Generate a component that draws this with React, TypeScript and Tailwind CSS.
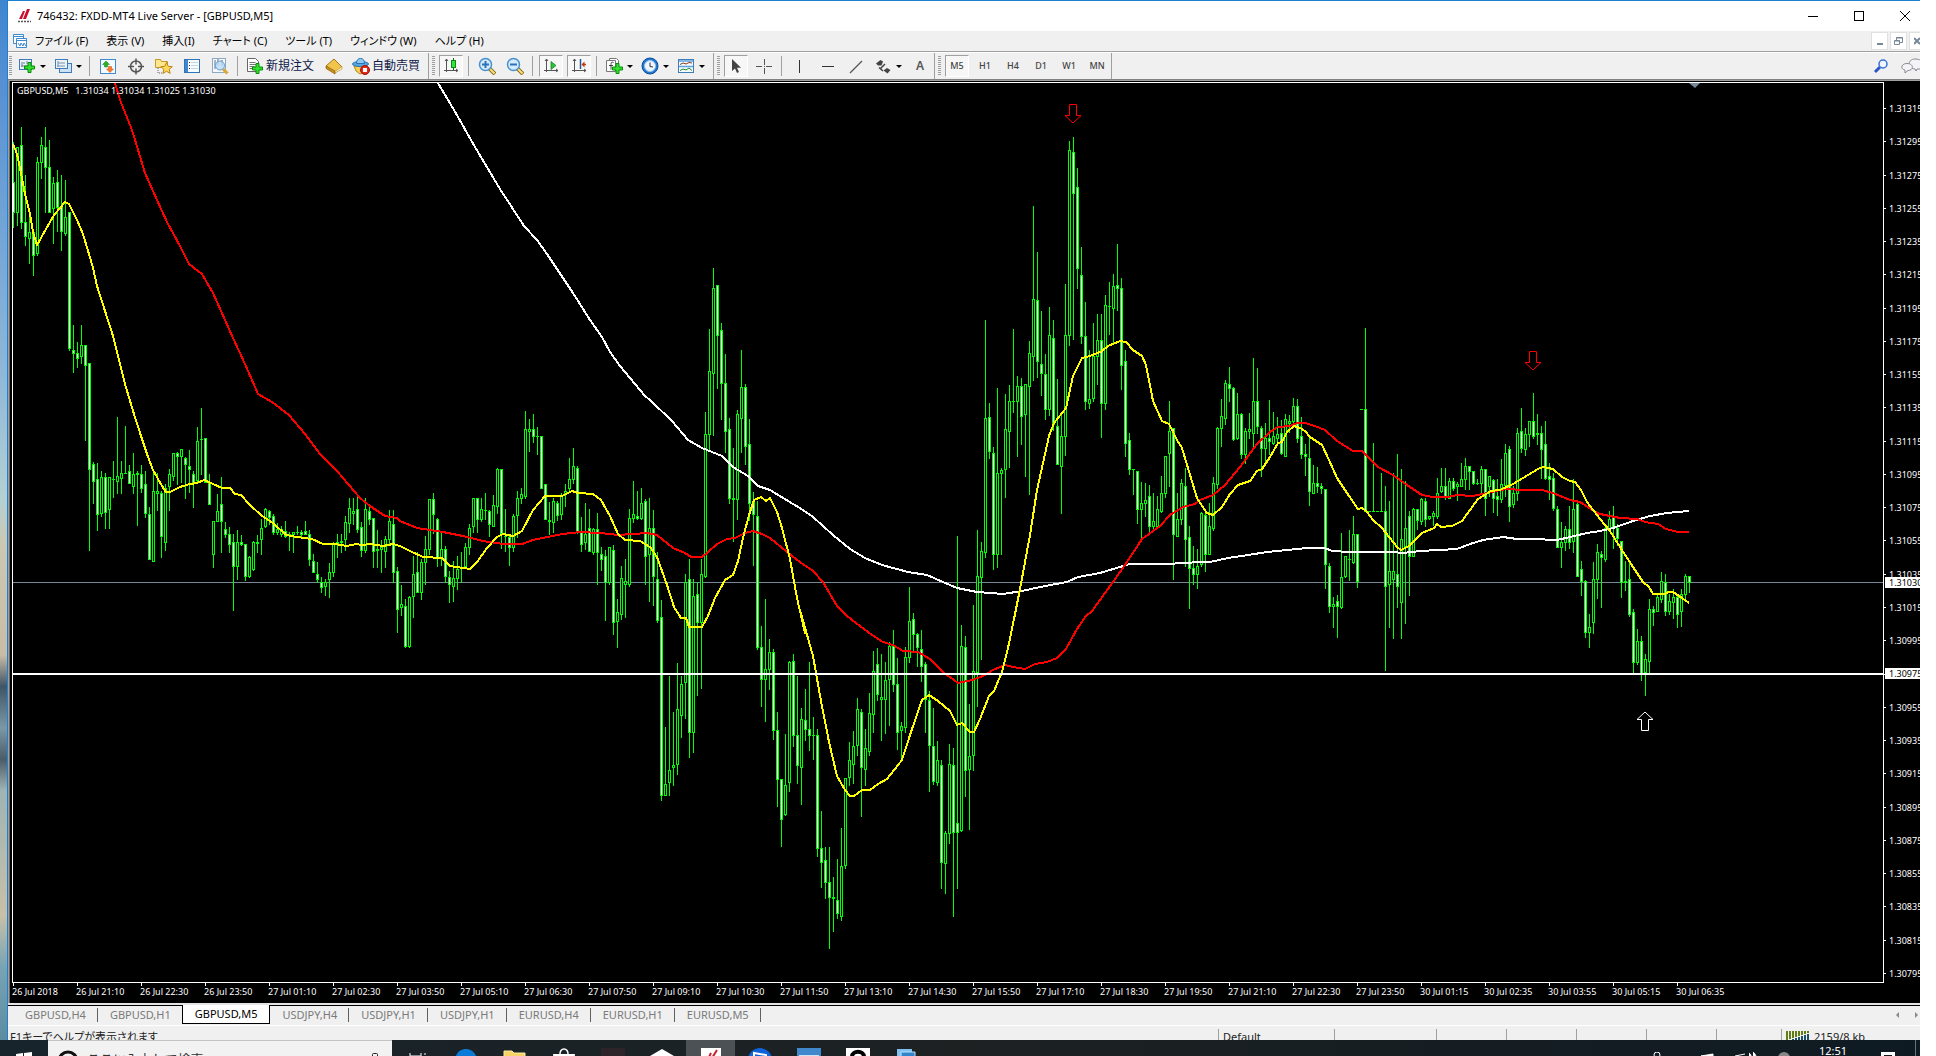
import React from 'react';

type Bar = { x: number; high: number; top: number; bottom: number; low: number; bear: boolean };

// each strip holds its own origin and scale; a trailing "b" marks a bearish bar
const strips = [
  {
    x: 13, y: 100, scale: 2.8,
    bars: `120,230,315,358b 132,132,315,352 78,127,343,360b 210,343,382,408b 330,370,388,458 370,370,436,492b 160,175,430,436 104,127,175,220 78,132,188,316b 112,190,315,315b
      218,233,303,402 196,230,302,368b 210,302,367,422b 224,328,374,380 316,316,696,702b 632,700,710,762b 680,710,724,748b 630,686,718,738 686,686,744,952b 737,737,1035,1260b
      1016,1020,1069,1130b 1018,1062,1161,1204b 1040,1058,1158,1166 1046,1058,1154,1200b 1058,1058,1147,1200 1012,1062,1062,1112 890,1054,1069,1103 1012,1046,1060,1103 913,1046,1046,1046 1024,1040,1074,1074b
      990,1048,1082,1103 1040,1046,1048,1190 1024,1048,1088,1098b 1040,1076,1158,1168b 1142,1160,1287,1287b 1044,1096,1292,1292 1046,1097,1103,1148 1096,1101,1223,1282b 1076,1088,1239,1260 1034,1048,1082,1148
      990,990,1054,1064 986,990,998,1076b 978,978,998,1072 1002,1003,1020,1117b 982,1026,1034,1098b 1040,1048,1070,1140b 918,956,1066,1074 865,950,950,1048 947,947,1070,1070b 1048,1070,1132,1132b
      1180,1180,1272,1308 1104,1152,1180,1180 1058,1132,1181,1266b 1184,1202,1216,1225b 1198,1216,1245,1266b 1216,1238,1306,1428b 1206,1238,1306,1343 1220,1238,1245,1248b 1244,1244,1335,1344b 1278,1280,1335,1337
      1236,1238,1314,1316 1220,1240,1242,1266 1174,1199,1230,1273 1144,1146,1195,1198 1150,1152,1170,1188b 1160,1166,1210,1217b 1186,1202,1210,1216 1193,1203,1216,1222 1180,1208,1222,1225b 1210,1216,1216,1260
      1210,1212,1216,1266 1193,1210,1210,1216 1206,1210,1216,1222b 1180,1208,1216,1216b 1206,1216,1287,1302b 1272,1292,1322,1322b 1294,1328,1342,1350b 1338,1352,1364,1380b 1342,1350,1362,1386 1298,1322,1342,1392
      1240,1243,1322,1335 1216,1240,1242,1280 1216,1236,1238,1268 1165,1184,1230,1260 1115,1144,1186,1210 1115,1152,1158,1188 1112,1146,1202,1210b 1184,1198,1260,1279b 1117,1146,1260,1266 1142,1152,1175,1188b
      1172,1172,1265,1308b 1206,1258,1260,1308 1234,1252,1258,1322 1222,1230,1265,1308 1150,1180,1230,1243 1150,1188,1322,1350b 1308,1320,1427,1490b 1360,1412,1420,1442 1398,1418,1530,1532b 1390,1392,1530,1532
      1278,1328,1390,1448 1266,1322,1378,1380b`,
  },
  {
    x: 421, y: 240, scale: 2.1778,
    bars: `695,702,768,784 645,674,702,750 565,565,674,684 551,565,598,640b 606,608,692,711b 640,674,694,708 668,674,733,745b 722,735,750,790b 700,738,755,788 690,717,738,762
      680,716,716,746 660,670,711,712 620,628,670,686 563,563,625,636 563,563,608,636b 563,587,608,614 551,590,590,608 590,592,619,645b 557,579,623,624 497,500,580,596
      500,500,640,672b 587,645,646,679 645,648,670,708b 598,602,670,678 548,564,601,648 541,554,564,574 373,412,558,564 390,412,416,461 379,412,428,440b 408,428,428,468
      428,428,541,541b 532,532,608,608b 572,610,612,642 563,569,616,636 570,574,601,610b 552,556,598,608 532,547,552,581 475,521,542,545 453,493,521,530 493,498,635,640b
      605,637,663,678b 573,641,658,675 586,628,678,678b 628,630,680,684 595,630,681,750b 670,685,695,719b 676,690,745,828b 670,670,745,750 666,677,833,859b 782,811,831,888
      710,738,815,826 695,744,750,823 586,606,750,755 525,597,606,616 547,602,607,609b 541,574,606,608 565,569,689,750b 563,628,685,788 590,628,733,795b 680,739,828,832b
      786,822,1210,1220b 1061,1186,1210,1210 950,1155,1181,1210 1028,1144,1149,1187 923,1022,1142,1164 950,968,1035,1084 728,746,964,1041 695,739,1073,1128b 739,776,1073,1117 745,772,832,993b
      695,728,832,976 376,423,733,735 196,286,424,460 61,105,291,425 100,100,209,323b 181,197,312,390b 250,312,417,462b 388,413,563,574b 453,563,566,657 372,380,565,609
      240,322,389,462 314,322,450,490b 390,445,574,610b 550,569,598,708b 569,602,887,892b 842,887,957,1015b 782,935,957,1048 869,898,935,980 891,898,1068,1088b 1028,1068,1175,1233b
      1175,1175,1262,1320b 1076,1188,1252,1254 917,920,1181,1200 902,918,1079,1102b 950,1079,1144,1184b 1020,1044,1149,1230 980,1046,1066,1090b 920,1066,1079,1111b 1039,1079,1079,1132 1066,1079,1325,1342b
      1245,1325,1356,1410b 1322,1351,1399,1435b 1322,1399,1432,1542b 1388,1432,1434,1505 1350,1438,1467,1477b`,
  },
  {
    x: 841, y: 120, scale: 1.8667,
    bars: `1322,1394,1486,1495 1230,1230,1391,1397 1162,1195,1228,1243 1142,1170,1203,1238 1080,1101,1168,1186 1101,1106,1209,1300b 1137,1174,1212,1242 1070,1108,1178,1186 992,1030,1110,1144 987,1016,1073,1084b
      997,1078,1082,1158 1012,1047,1082,1145 976,982,1044,1130 953,982,1054,1066b 1006,1054,1143,1175b 1125,1133,1139,1198 984,1003,1134,1143 872,936,1003,1012 921,932,960,990b 958,960,985,1020b
      953,988,1020,1048b 1012,1017,1082,1144b 1066,1084,1168,1253b 1098,1170,1234,1241b 1160,1195,1236,1242 1195,1205,1386,1435b 1328,1332,1388,1443 1166,1203,1331,1350 1174,1205,1330,1486b 778,1314,1330,1434b
      944,982,1326,1328 965,984,1214,1262b 1092,1189,1212,1325 907,1030,1186,1214 766,852,1032,1094 788,806,854,1008 375,558,807,816 530,556,619,632b 612,623,811,840b 502,660,811,836
      650,655,660,812 512,578,652,704 496,525,581,648 391,525,525,546 478,497,525,629 482,497,553,605b 493,494,550,666 413,436,497,700 162,336,441,487 248,337,451,480b
      357,457,473,514b 438,476,541,560b 350,403,541,552 375,407,569,580b 484,572,643,644b 552,590,647,735 308,403,591,626 40,57,403,421 32,60,137,409b 90,126,277,315b
      238,290,404,417b 341,404,525,541b 430,521,529,539 379,441,520,526 364,411,441,493 364,411,529,592b 327,346,529,541 304,348,348,400 289,311,352,417 233,309,314,356b
      295,315,458,504b 430,451,604,628b 586,599,652,662b 652,652,652,700 656,656,727,754b 677,715,727,779 679,711,716,741 683,702,759,768b 697,749,759,766 702,727,759,761
      665,697,730,732 628,628,697,704 525,581,623,685 576,576,774,858b 697,745,777,778 672,678,745,756 650,684,783,833b 758,779,838,911b 797,838,848,868b 801,833,848,874
      733,735,830,834 730,739,811,843b 715,758,811,812 668,678,762,766 574,576,680,687 521,553,576,610 487,491,558,568 462,493,502,526b 500,502,596,598b 511,549,594,596`,
  },
  {
    x: 1241, y: 300, scale: 3,
    bars: `340,343,464,476b 386,395,464,491 341,388,395,416 174,304,401,444 204,304,379,401b 378,385,446,530b 370,415,446,494 302,416,425,462b 338,408,430,432 353,403,416,430
      361,400,461,464b 343,358,469,470 346,364,370,398 294,318,365,378 297,318,416,426b 353,409,464,476b 432,463,469,525b 415,475,575,615b 497,549,580,581 503,550,560,576b
      549,559,566,580b 568,568,794,864b 791,799,920,936b 891,912,920,981 887,903,920,1011b 701,832,922,924 768,768,830,833 692,778,778,840 648,703,788,790 703,703,845,861b
      328,328,328,328 84,328,634,634b 634,634,634,634 430,634,634,634 634,634,634,634 519,634,634,634 558,634,860,1110b 603,814,853,981 519,814,838,1014 462,823,860,921b
      507,717,908,1014 543,685,740,969 633,648,769,886b 625,627,769,770 627,628,660,688b 594,597,664,674 595,604,659,680b 649,650,656,658 633,640,650,675 534,580,650,656
      504,559,574,576 504,560,590,597b 535,543,595,596 534,544,566,570b 548,553,560,600 491,538,559,560 474,499,539,567 499,500,515,567b 514,515,551,554b 538,550,550,554
      498,507,550,576 507,508,596,645b 529,530,560,590 538,540,596,636b 537,590,599,645b 477,553,599,606 432,460,555,590 438,448,620,665b 560,580,614,621 384,400,580,600
      324,394,446,456b 384,403,448,465 363,364,404,440 279,364,410,416b 342,400,403,432 378,401,448,536b 363,433,536,537b 489,530,538,597b 519,535,626,630b 618,628,742,743b
      668,727,742,801 678,688,728,750 618,688,728,744b 538,628,725,756 604,612,829,830b 783,809,845,885b 842,845,998,1011b 942,982,998,1041 786,838,968,999 732,757,838,894
      753,763,773,921b 682,684,779,784 633,658,686,690 618,650,686,744b 672,685,714,736b 723,725,848,891b 783,845,847,870 786,838,944,950b 927,937,1088,1120b 987,1024,1088,1094`,
  },
  {
    x: 1641, y: 340, scale: 3,
    bars: `888,904,999,1020b 942,958,997,1067 777,808,965,996 798,808,818,855b 765,772,814,815 696,723,779,788 702,727,814,825b 762,784,814,824 748,772,788,834 770,772,824,863b
      747,763,814,860 702,709,763,774 709,709,727,756b`,
  },
];

const bars: Bar[] = strips.flatMap((s) =>
  s.bars.trim().split(/\s+/).map((text, i) => {
    const [high, top, bottom, low] = text
      .replace('b', '')
      .split(',')
      .map((v) => Math.floor(Number(v) / s.scale + s.y));
    return { x: s.x + i * 4, high, top, bottom, low, bear: text.endsWith('b') };
  })
);

const line = (x: number, y: number, kx: number, ky: number, text: string) =>
  text
    .trim()
    .split(/\s+/)
    .map((p) => {
      const [px, py] = p.split(',').map(Number);
      return `${Math.round(px / kx + x)},${Math.round(py / ky + y)}`;
    })
    .join(' ');

const yellowLine = [
  line(0, 100, 3, 2.8, `40,122 50,150 64,205 76,262 90,318 100,370 111,405 137,360 162,322 180,302 196,286 208,291 232,335 250,375 268,430 280,470 292,520 316,590 340,660 376,795 400,870 424,940 440,990 460,1035 485,1080 498,1098 510,1098 540,1083 570,1074 590,1072 612,1064 640,1075 665,1085 690,1087 706,1102 724,1105 750,1133 785,1165 820,1185 858,1219 890,1224 935,1229 968,1242 1005,1243 1040,1249 1068,1243 1085,1246 1110,1242 1150,1248 1180,1243 1200,1249`),
  line(400, 240, 3, 2.1778, `0,666 30,677 70,690 125,692 150,709 210,717 232,701 262,670 292,647 310,640 340,645 365,633 400,588 435,558 485,557 517,547 535,552 580,553 603,566 630,602 655,640 675,653 720,656 750,668 772,690 800,752 822,800 843,823 857,824 868,842 905,842 925,818 945,780 975,740 1000,729 1013,700 1030,648 1047,598 1062,566 1082,560 1097,569 1109,562 1130,592 1147,628 1170,695 1190,780 1215,855`),
  line(800, 120, 3, 1.8667, `0,915 40,1000 64,1085 88,1162 112,1224 135,1250 150,1262 162,1262 185,1250 210,1251 235,1240 262,1230 305,1195 330,1148 365,1082 387,1073 415,1084 450,1103 472,1129 487,1126 510,1142 522,1142 540,1118 567,1075 583,1066 605,1030 625,985 640,940 660,875 690,775 712,690 730,640 748,590 762,565 797,538 820,478 845,444 870,441 905,431 925,421 960,412 977,415 1000,430 1025,441 1037,458 1060,525 1085,562 1108,568 1130,597 1147,612 1190,705`),
  line(1200, 300, 3, 3, `0,610 22,640 40,645 65,622 90,581 115,556 150,544 172,514 187,507 210,472 235,430 245,425 262,396 282,377 300,383 315,393 330,412 365,434 388,480 410,535 440,580 473,627 485,624 500,636 520,660 545,685 590,742 603,750 628,738 665,700 702,684 712,671 723,681 755,677 785,664 810,630 835,598 872,573 900,570 940,553 985,526 1013,506 1030,501 1060,507 1085,530 1110,542 1125,545 1142,570 1160,605`),
  line(1600, 340, 3, 3, `0,538 30,572 60,620 100,680 130,727 148,742 160,761 195,761 205,756 220,756 245,773 268,790`),
].join(' ');

const redLine = [
  '115,83',
  line(0, 100, 3, 2.8, `360,0 395,85 435,205 470,280 500,342 540,408 568,458 606,488 640,540 700,665 735,740 773,823 815,845 868,883 915,935 960,990 1010,1040 1080,1115 1110,1137 1155,1165 1190,1171`),
  line(400, 240, 3, 2.1778, `0,612 50,627 130,636 190,645 250,655 310,661 365,661 400,653 440,646 490,640 540,637 600,638 655,643 700,640 740,638 770,643 820,671 855,682 872,690 905,690 925,680 950,661 980,651 1005,650 1035,638 1060,634 1085,641 1110,648 1160,680`),
  line(800, 120, 3, 1.8667, `0,825 40,842 70,863 110,907 140,926 180,944 215,962 250,974 280,980 310,991 355,994 390,1006 430,1031 473,1051 515,1046 550,1038 580,1027 615,1018 640,1022 675,1024 705,1016 740,1012 770,1004 797,988 830,950 857,926 877,916 940,862 975,830 1025,782 1080,757 1110,738 1150,722 1185,717`),
  line(1200, 300, 3, 3, `0,600 40,584 75,554 120,500 172,433 210,395 235,381 270,377 290,369 315,369 345,377 375,389 412,424 460,452 485,453 505,470 535,500 580,526 620,555 665,586 700,590 745,590 770,585 815,588 850,582 900,571 925,566 965,570 1025,570 1060,580 1110,599 1140,607 1190,640`),
  line(1600, 340, 3, 3, `0,522 60,533 110,537 135,546 175,552 197,566 235,576 268,576`),
].join(' ');

const whiteLine = [
  '438,83 454,110 475,147 500,189 524,226',
  line(400, 240, 3, 2.1778, `410,0 440,30 520,115 570,175 605,212 630,245 660,275 735,340 750,348 815,395 865,435 905,452 965,471 1000,495 1045,513 1075,536 1110,545 1180,574`),
  line(800, 120, 3, 1.8667, `0,724 40,742 100,775 150,800 195,818 245,831 325,844 380,850 430,863 470,873 530,882 610,884 665,880 720,871 800,862 835,853 900,845 990,829 1100,828`),
  line(1200, 300, 3, 3, `0,787 30,785 85,773 145,766 200,757 260,750 320,743 375,744 395,752 450,755 580,756 610,759 660,753 770,748 810,733 850,719 910,711 950,718 1000,717 1070,719 1110,710 1160,699`),
  line(1600, 340, 3, 3, `0,573 40,563 100,543 150,529 200,519 235,517 268,512`),
].join(' ');

const prices = Array.from({ length: 27 }, (_, i) => (1.31315 - i * 0.0002).toFixed(5));

const dates = [
  '26 Jul 2018', '26 Jul 21:10', '26 Jul 22:30', '26 Jul 23:50', '27 Jul 01:10', '27 Jul 02:30', '27 Jul 03:50',
  '27 Jul 05:10', '27 Jul 06:30', '27 Jul 07:50', '27 Jul 09:10', '27 Jul 10:30', '27 Jul 11:50', '27 Jul 13:10',
  '27 Jul 14:30', '27 Jul 15:50', '27 Jul 17:10', '27 Jul 18:30', '27 Jul 19:50', '27 Jul 21:10', '27 Jul 22:30',
  '27 Jul 23:50', '30 Jul 01:15', '30 Jul 02:35', '30 Jul 03:55', '30 Jul 05:15', '30 Jul 06:35',
];

const menus = ['ファイル (F)', '表示 (V)', '挿入(I)', 'チャート (C)', 'ツール (T)', 'ウィンドウ (W)', 'ヘルプ (H)'];

const tabs = [
  'GBPUSD,H4', 'GBPUSD,H1', 'GBPUSD,M5', 'USDJPY,H4', 'USDJPY,H1', 'USDJPY,H1', 'EURUSD,H4', 'EURUSD,H1', 'EURUSD,M5',
];

const Svg = ({ size = 18, children }: { size?: number; children: React.ReactNode }) => (
  <svg width={size} height={size} viewBox={`0 0 ${size} ${size}`} fill="none" className="shrink-0">
    {children}
  </svg>
);

const Plus = ({ x, y }: { x: number; y: number }) => (
  <path
    transform={`translate(${x} ${y})`}
    d="M4 .5h3V4h3.500v3H7v3.500H4V7H.5V4H4z"
    fill="#2fe02f"
    stroke="#0a8a0a"
  />
);

const Axes = () => (
  <path d="M4.500 2v13M2 13.500h14M3 4l1.500-2L6 4M14 12l2 1.500-2 1.500" stroke="#555" />
);

const icons = {
  newChart: (
    <Svg>
      <rect x="1.500" y="2.500" width="12" height="10" fill="#eaf3fb" stroke="#3f7cb8" />
      <path d="M4 5v5M3 9h8M6 5v2M9 4v3" stroke="#6b7f93" />
      <Plus x={6} y={5} />
    </Svg>
  ),
  profiles: (
    <Svg>
      <rect x="5.500" y="6.500" width="12" height="9" fill="#cfe2f5" stroke="#3f7cb8" />
      <rect x="1.500" y="2.500" width="12" height="9" fill="#eaf3fb" stroke="#3f7cb8" />
      <path d="M4 4v6M3 9h8M4 6h7" stroke="#7d92a8" />
    </Svg>
  ),
  market: (
    <Svg>
      <rect x="1.500" y="2.500" width="15" height="14" fill="#f6fbff" stroke="#3f8bd0" />
      <path d="M7 4l3.500 3.500H8.500V10h-3V7.500H3.500z" fill="#27b327" stroke="#12801a" strokeWidth=".5" />
      <path d="M11 15.500L7.500 12h2V9.500h3V12h2z" fill="#ff7a2a" stroke="#c4480c" strokeWidth=".5" />
    </Svg>
  ),
  target: (
    <Svg>
      <circle cx="9" cy="9.500" r="5.500" stroke="#555" strokeWidth="1.500" />
      <path d="M9 1.500v6M9 11.500v6M1 9.500h6M11 9.500h6" stroke="#555" strokeWidth="1.500" />
    </Svg>
  ),
  navigator: (
    <Svg>
      <path d="M.5 2.500h5l1 2h6v6h-12z" fill="#ffe68a" stroke="#c39a27" />
      <path d="M3 11v5h4" stroke="#666" strokeDasharray="1 1" />
      <path d="M11.500 5.500l1.700 3.800 4.100.4-3.100 2.700 1 4-3.700-2.100-3.600 2.100.9-4-3-2.700 4-.4z" fill="#ffd858" stroke="#b8861b" />
    </Svg>
  ),
  terminal: (
    <Svg>
      <rect x="1.500" y="2.500" width="15" height="13" fill="#f6fbff" stroke="#2f74b5" />
      <rect x="2" y="3" width="3" height="12" fill="#3f88cf" />
      <path d="M8 5.500h7M8 8.500h7M8 11.500h7" stroke="#c6d5e4" />
      <path d="M6 5.500h1M6 8.500h1M6 11.500h1" stroke="#333" />
    </Svg>
  ),
  tester: (
    <Svg>
      <rect x="1.500" y="1.500" width="13" height="14" fill="#f3f8fc" stroke="#8fa9c2" />
      <path d="M4 3v9M7 2v6M11 3v6" stroke="#5c7288" />
      <path d="M12 12l4.500 4.500" stroke="#d8a93a" strokeWidth="3" />
      <circle cx="9" cy="8.500" r="4.500" fill="#b8dcf8" fillOpacity=".8" stroke="#6d9cc6" />
    </Svg>
  ),
  order: (
    <Svg>
      <path d="M1.500 1.500h8l3 3v10h-11z" fill="#fff" stroke="#666" />
      <path d="M3.500 5.500h6M3.500 7.500h7M3.500 9.500h5M3.500 11.500h3" stroke="#777" />
      <Plus x={6} y={6} />
    </Svg>
  ),
  book: (
    <Svg>
      <path d="M1 9l8-7 8 8-7 6z" fill="#f1c54c" stroke="#a87912" />
      <path d="M1 9v2.500l9 5.500v-3z" fill="#c98f1c" stroke="#8c620d" strokeWidth=".7" />
      <path d="M10 16v-1.500l7-5V12z" fill="#fff3c8" stroke="#a87912" strokeWidth=".5" />
    </Svg>
  ),
  auto: (
    <Svg>
      <path d="M2 9h13l-2 6-5 2-4-3z" fill="#f5cf52" stroke="#b98a1c" />
      <ellipse cx="8.500" cy="7" rx="8" ry="2.600" fill="#56a6e2" stroke="#2a73b0" />
      <path d="M4.500 6.500C4.500 3 6 1.500 8.500 1.500s4 1.500 4 5z" fill="#8fcaf2" stroke="#2a73b0" />
      <circle cx="13" cy="13" r="4.500" fill="#e02a1c" stroke="#a01208" />
      <rect x="11" y="11" width="4" height="4" fill="#fff" />
    </Svg>
  ),
  candle: (
    <Svg>
      <Axes />
      <path d="M11.500 1v12" stroke="#0a6b12" />
      <rect x="9.500" y="3.500" width="4" height="7" fill="#2ee63c" stroke="#0a8a18" />
    </Svg>
  ),
  zoomIn: (
    <Svg>
      <path d="M11 11l6 6" stroke="#8a6d1c" strokeWidth="4" />
      <path d="M11 11l5.500 5.500" stroke="#ffe07a" strokeWidth="2" />
      <circle cx="7.500" cy="7.500" r="6" fill="#d3ebfc" stroke="#4a90cf" strokeWidth="1.500" />
      <path d="M7.500 4v7M4 7.500h7" stroke="#2d74b6" strokeWidth="2" />
    </Svg>
  ),
  zoomOut: (
    <Svg>
      <path d="M11 11l6 6" stroke="#8a6d1c" strokeWidth="4" />
      <path d="M11 11l5.500 5.500" stroke="#ffe07a" strokeWidth="2" />
      <circle cx="7.500" cy="7.500" r="6" fill="#d3ebfc" stroke="#4a90cf" strokeWidth="1.500" />
      <path d="M4 7.500h7" stroke="#2d74b6" strokeWidth="2" />
    </Svg>
  ),
  scroll: (
    <Svg>
      <Axes />
      <path d="M9 4.500l5 4-5 4z" fill="#2ec43a" stroke="#0a7a18" strokeWidth=".7" />
    </Svg>
  ),
  shift: (
    <Svg>
      <Axes />
      <path d="M10.500 2v10" stroke="#1d5a96" strokeWidth="1.500" />
      <path d="M16 7.500h-3" stroke="#c23a0c" strokeWidth="1.500" />
      <path d="M11.500 7.500l3-3v6z" fill="#c23a0c" />
    </Svg>
  ),
  indicator: (
    <Svg>
      <path d="M4.500 1.500h7l2 2v9h-9z" fill="#fff" stroke="#777" />
      <path d="M1.500 3.500h9v11h-9z" fill="#fff" stroke="#777" />
      <path d="M8.500 5.500c-2-1-2.500 0-2.500 2v5M4 8.500h4" stroke="#444" />
      <Plus x={7} y={6} />
    </Svg>
  ),
  clock: (
    <Svg>
      <circle cx="9" cy="9" r="8" fill="#2478d4" stroke="#0d4d97" />
      <circle cx="9" cy="9" r="5.500" fill="#eef7ff" stroke="#9cc4ea" />
      <path d="M9 5.500V9.500l3 .5" stroke="#333" />
    </Svg>
  ),
  template: (
    <Svg>
      <rect x="1.500" y="2.500" width="15" height="13" fill="#f6fbff" stroke="#3f7cb8" />
      <path d="M2 4h14M2 9.500h14" stroke="#5ea3e0" strokeWidth="1.500" />
      <path d="M3 7.500l3-1.500 3 1 3-1.500 3 .5" stroke="#8c3a1c" />
      <path d="M3 13.500l3-1.500 3 1 3-2 3 2.500" stroke="#1f8a2a" />
    </Svg>
  ),
  cursor: (
    <Svg>
      <path d="M5 2v12l3-2.500 2 4.500 2-1-2-4.300h4z" fill="#444" />
    </Svg>
  ),
  cross: (
    <Svg>
      <path d="M9.500 2v6M9.500 11v6M1 9.500h6M11 9.500h6M9 9.500h1" stroke="#555" />
    </Svg>
  ),
  vline: (
    <Svg>
      <path d="M8.500 3v13" stroke="#333" />
    </Svg>
  ),
  hline: (
    <Svg>
      <path d="M3 9.500h12" stroke="#333" />
    </Svg>
  ),
  trend: (
    <Svg>
      <path d="M3 16L15 4" stroke="#555" strokeWidth="1.200" />
    </Svg>
  ),
  arrows: (
    <Svg>
      <path d="M2 6.500L6.500 3 9 4.500 7.500 8.500H4z" fill="#444" />
      <path d="M6 12l5-5M5 10.500L9 14" stroke="#444" strokeWidth="1.500" />
      <path d="M9.500 13.500L13 11l3.500 2-3 3.500z" fill="#444" />
    </Svg>
  ),
};

const Arrow = () => <span className="mt-px border-x-[3px] border-t-[3px] border-x-transparent border-t-black" />;

const Tool = ({ label, pressed, children }: { label: string; pressed?: boolean; children: React.ReactNode }) => (
  <button
    aria-label={label}
    className={`mx-0.5 flex h-[22px] w-6 shrink-0 items-center justify-center border ${
      pressed ? 'border-t-[#a0a0a0] border-l-[#a0a0a0] border-r-white border-b-white bg-[#f7f7f7]' : 'border-transparent'
    }`}
  >
    {children}
  </button>
);

const DropTool = ({ label, children }: { label: string; children: React.ReactNode }) => (
  <button aria-label={label} className="flex h-[22px] w-9 shrink-0 items-center justify-between px-1">
    {children}
    <Arrow />
  </button>
);

const TextTool = ({ text, children }: { text: string; children: React.ReactNode }) => (
  <button className="flex h-[22px] shrink-0 items-center gap-0.5 pr-1.5 pl-1 text-[12px] text-[#111a4a]">
    {children}
    <span>{text}</span>
  </button>
);

const Sep = () => <span className="mr-1 ml-[3px] h-5 w-px shrink-0 bg-[#a0a0a0]" />;

const Band = ({ first, children }: { first?: boolean; children: React.ReactNode }) => (
  <div className={`flex h-[26px] shrink-0 items-center border-r border-[#a0a0a0] ${first ? 'pr-0.5 pl-px' : 'pl-[3px]'}`}>
    <span className="mr-0.5 h-5 w-[3px] shrink-0 bg-[repeating-linear-gradient(#a0a0a0_0_1px,transparent_1px_2px)]" />
    {children}
  </div>
);

const frames = ['M5', 'H1', 'H4', 'D1', 'W1', 'MN'];

const Toolbar = () => (
  <div className="flex h-[28px] items-center border-t border-b border-t-white border-b-[#808080] bg-[#f0f0f0]">
    <Band first>
      <DropTool label="新規チャート">{icons.newChart}</DropTool>
      <DropTool label="チャートの組表示">{icons.profiles}</DropTool>
      <Sep />
      <Tool label="気配値表示">{icons.market}</Tool>
      <Tool label="データウィンドウ">{icons.target}</Tool>
      <Tool label="ナビゲーター">{icons.navigator}</Tool>
      <Tool label="ターミナル">{icons.terminal}</Tool>
      <Tool label="ストラテジーテスター">{icons.tester}</Tool>
      <Sep />
      <TextTool text="新規注文">{icons.order}</TextTool>
      <Tool label="エディター">{icons.book}</Tool>
      <TextTool text="自動売買">{icons.auto}</TextTool>
    </Band>
    <Band>
      <Tool label="ローソク足" pressed>{icons.candle}</Tool>
      <Sep />
      <Tool label="拡大">{icons.zoomIn}</Tool>
      <Tool label="縮小">{icons.zoomOut}</Tool>
      <Sep />
      <Tool label="自動スクロール" pressed>{icons.scroll}</Tool>
      <Tool label="チャートシフト" pressed>{icons.shift}</Tool>
      <Sep />
      <DropTool label="インディケータ">{icons.indicator}</DropTool>
      <DropTool label="時間足">{icons.clock}</DropTool>
      <DropTool label="定型チャート">{icons.template}</DropTool>
      <span className="w-1" />
    </Band>
    <Band>
      <Tool label="カーソル" pressed>{icons.cursor}</Tool>
      <Tool label="クロスヘア">{icons.cross}</Tool>
      <Sep />
      <Tool label="垂直線">{icons.vline}</Tool>
      <Tool label="水平線">{icons.hline}</Tool>
      <Tool label="トレンドライン">{icons.trend}</Tool>
      <DropTool label="矢印">{icons.arrows}</DropTool>
      <Tool label="テキスト">
        <span className="text-[12px] font-semibold text-[#555]">A</span>
      </Tool>
    </Band>
    <Band>
      {frames.map((f, i) => (
        <Tool key={f} label={f} pressed={i === 0}>
          <span className="text-[9px] font-medium text-[#444]">{f}</span>
        </Tool>
      ))}
    </Band>
    <div className="ml-auto flex items-center gap-3">
      <button aria-label="検索">
        <Svg size={16}>
          <path d="M7 9l-5 5" stroke="#2a56c8" strokeWidth="3" />
          <circle cx="10" cy="6" r="4" fill="#eef6ff" stroke="#3a6fd8" strokeWidth="1.500" />
        </Svg>
      </button>
      <button aria-label="チャット">
        <svg width="19" height="16" viewBox="0 0 19 16" fill="#f4f4f8" stroke="#8a8a92">
          <path d="M19 11h-3l-1 2-1-2c-9-1-7-10 0-10 3 0 5 1 5 1" />
          <path d="M6 5.500c7 0 7 7 1 7L4 15l0-3C-1 11 0 5.500 6 5.500z" />
        </svg>
      </button>
    </div>
  </div>
);

const Candles = () => (
  <g shapeRendering="crispEdges">
    {bars.map((b) => {
      const height = b.bottom - b.top + 1;
      return (
        <React.Fragment key={b.x}>
          <rect x={b.x} y={b.high} width="1" height={b.low - b.high + 1} fill="#00ff00" />
          <rect x={b.x - 1} y={b.top} width="3" height={height} fill="#00ff00" />
          {height > 2 && (
            <rect x={b.x} y={b.top + 1} width="1" height={height - 2} fill={b.bear ? '#ffffff' : '#000000'} />
          )}
        </React.Fragment>
      );
    })}
  </g>
);

const Chart = () => (
  <div className="border-t border-l border-[#a0a0a0]">
    <div className="border-l border-[#696969] bg-black pt-px pl-0.5">
      <div className="flex">
        <div className="relative min-w-0 flex-1 border border-white">
          <p className="absolute top-0.5 left-1 text-[9px] leading-[11px] whitespace-pre text-white">
            GBPUSD,M5{'   '}1.31034 1.31034 1.31025 1.31030
          </p>
          <svg className="block h-[899px] w-full overflow-hidden">
            <g transform="translate(-13 -83)">
              <rect x="13" y="582" width="100%" height="1" fill="#778899" />
              <Candles />
              <g fill="none" strokeWidth="2" shapeRendering="crispEdges" strokeLinejoin="round">
                <polyline points={whiteLine} stroke="#ffffff" />
                <polyline points={redLine} stroke="#ff0000" />
                <polyline points={yellowLine} stroke="#ffff00" />
              </g>
              <rect x="13" y="673" width="100%" height="2" fill="#ffffff" />
              <path d="M1689 83h11l-5 5z" fill="#778899" />
              <path id="sell" d="M1069.500 104.500h7v11h4.500l-8 7.500-8-7.500h4.500z" fill="none" stroke="#ff0000" />
              <use href="#sell" x="460" y="247" />
              <path d="M1641.500 730.500h7v-11h4.500l-8-7.500-8 7.500h4.500z" fill="none" stroke="#ffffff" />
            </g>
          </svg>
        </div>
        <div className="relative w-9 shrink-0 overflow-hidden pt-[21px]">
          <div className="flex h-[876px] flex-col justify-between text-[9px] leading-[11px] text-white">
            {prices.map((p) => (
              <div key={p} className="flex items-center gap-[3px]">
                <span className="h-px w-0.5 shrink-0 bg-white" />
                {p}
              </div>
            ))}
          </div>
          <span className="absolute top-[495px] left-px w-full bg-white pl-1 text-[9px] leading-[11px] text-black">1.31030</span>
          <span className="absolute top-[586px] left-px w-full bg-white pl-1 text-[9px] leading-[11px] text-black">1.30975</span>
        </div>
      </div>
      <div className="flex h-5 overflow-hidden">
        {dates.map((d, i) => (
          <div key={i} className="w-16 shrink-0">
            <div className="ml-px h-[3px] w-px bg-white" />
            <div className="text-[9px] leading-[12px] whitespace-nowrap text-white">{d}</div>
          </div>
        ))}
      </div>
    </div>
  </div>
);

const TabBar = () => (
  <div className="border-t-2 border-[#e4e4e4] bg-[#f0f0f0]">
    <div className="flex h-[21px] items-start border-t border-b border-t-black border-b-white pl-px">
      {tabs.map((t, i) =>
        i === 2 ? (
          <button key={i} className="-mt-px h-[19px] border border-t-0 border-black bg-white px-3 text-[11px] leading-[18px] text-black">
            {t}
          </button>
        ) : (
          <button key={i} className="flex h-[18px] items-center text-[11px] text-[#7a7a7a]">
            <span className={i === 0 ? 'pr-[11px] pl-4' : 'pr-[11px] pl-3'}>{t}</span>
            {i !== 1 && <span className="h-[14px] w-px bg-[#606060]" />}
          </button>
        )
      )}
      <div className="ml-auto flex h-[17px] items-center gap-4">
        <button aria-label="前へ" className="border-y-[3px] border-r-[3px] border-y-transparent border-r-[#888]" />
        <button aria-label="次へ" className="mr-0.5 border-y-[3px] border-l-[3px] border-y-transparent border-l-[#888]" />
      </div>
    </div>
  </div>
);

const StatusBar = () => (
  <div className="h-[14px] overflow-hidden bg-[#f0f0f0] text-[11px] leading-[16px] text-[#222]">
    <div className="flex h-5 pt-[3px]">
      <span className="flex-1 pl-0.5 [font-feature-settings:'palt']">F1キーでヘルプが表示されます</span>
      <span className="h-full w-[116px] border-l border-[#a0a0a0] pl-1">Default</span>
      <span className="h-full w-[102px] border-l border-[#a0a0a0]" />
      <span className="h-full w-[70px] border-l border-[#a0a0a0]" />
      <span className="h-full w-[70px] border-l border-[#a0a0a0]" />
      <span className="h-full w-[70px] border-l border-[#a0a0a0]" />
      <span className="h-full w-[70px] border-l border-[#a0a0a0]" />
      <span className="h-full w-[65px] border-l border-[#a0a0a0]" />
      <span className="flex h-full w-[139px] gap-1 border-l border-[#a0a0a0] pl-1">
        <svg width="24" height="14" className="mt-0.5 shrink-0" shapeRendering="crispEdges">
          {[0, 1, 2, 3, 4, 5, 6, 7].map((n) => (
            <React.Fragment key={n}>
              <rect x={n * 3} y="0" width="2" height={9 - n} fill="#5f7f14" />
              <rect x={n * 3} y={10 - n} width="2" height="9" fill="#1d5168" />
            </React.Fragment>
          ))}
        </svg>
        2159/8 kb
      </span>
    </div>
  </div>
);

const taskApps = [
  { name: 'タスク ビュー', icon: <path d="M5 5v3h11V5M20 5v2M20 10v10M5 18h11v-8H5z" stroke="#fff" fill="none" /> },
  { name: 'Edge', icon: <path d="M1 12C2 4 7 1 12 1s11 4 11 12H9c1 5 8 5 13 3v5C12 26 2 22 1 12z" fill="#0a7ad8" /> },
  { name: 'エクスプローラー', icon: <path d="M1 3h8l2 2h11v17H1z" fill="#f6d365" stroke="#fdeba6" /> },
  { name: 'ストア', icon: <><path d="M1 6h22l-2 16H3z" fill="#fff" /><path d="M8 7c-1-8 9-8 8 0" fill="none" stroke="#fff" strokeWidth="1.500" /></> },
  { name: 'Server', icon: <path d="M0 0h24v24H0z" fill="#2c2428" /> },
  { name: 'Dropbox', icon: <path d="M12 1l12 7v10l-12 6L0 18V8z" fill="#fff" /> },
  { name: 'MetaTrader', icon: <><path d="M2 0h20v24H2z" fill="#fff" /><path d="M12 5l-4 8M18 2l-5 8" stroke="#c8202a" strokeWidth="2" /></> },
  { name: 'メール', icon: <><circle cx="12" cy="12" r="12" fill="#0f62d8" /><path d="M6 5l12 2v10H6z" fill="none" stroke="#fff" strokeWidth="2" /></> },
  { name: 'TWS', icon: <><path d="M0 0h24v24H0z" fill="#3f88cc" /><path d="M2 7h20v3H2z" fill="#cfe3f5" /></> },
  { name: 'Agent', icon: <><path d="M0 0h24v24H0z" fill="#fff" /><path d="M6 14V9c0-7 12-7 12 0v5" fill="none" stroke="#000" strokeWidth="4" /></> },
  { name: 'リモート', icon: <><path d="M2 1h15v12H2z" fill="#7ec0f0" /><path d="M6 4h14v14H6z" fill="#2f86cc" stroke="#bfe0f8" /></> },
];

// the bar is 40px high and runs off the bottom of the screen
const Taskbar = () => (
  <div className="h-4 shrink-0 overflow-hidden bg-gradient-to-r from-[#17242c] via-[#1d2122] to-[#0e1a22]">
    <div className="flex h-10 items-center">
      <button aria-label="スタート" className="flex w-12 justify-center">
        <svg width="16" height="16" fill="#fff">
          <path d="M0 2l7-1v6.500H0zM8 1l8-1v7.500H8zM0 8.500h7V15l-7-1zM8 8.500h8V16l-8-1z" />
        </svg>
      </button>
      <label className="flex h-10 w-[344px] items-center gap-2 border-t border-[#c4c4c4] bg-[#f2f2f2] px-[9px]">
        <svg width="22" height="22" className="shrink-0">
          <circle cx="11" cy="11" r="9" fill="none" stroke="#111" strokeWidth="3" />
        </svg>
        <input
          aria-label="検索"
          placeholder="ここに入力して検索"
          className="h-8 min-w-0 flex-1 bg-transparent pb-1 text-[13px] text-[#333] outline-none placeholder:text-[#333]"
        />
        <svg width="16" height="16" fill="none" stroke="#222">
          <rect x="5.500" y="0.500" width="5" height="9" rx="1" />
          <path d="M2 7c0 7 12 7 12 0M8 13v3" />
        </svg>
      </label>
      {taskApps.map((a, i) => (
        <button
          key={a.name}
          aria-label={a.name}
          className={`flex h-10 w-[49px] items-center justify-center ${i === 6 ? 'bg-[#4b5154]' : ''}`}
        >
          <svg width="24" height="24" viewBox="0 0 24 24">{a.icon}</svg>
        </button>
      ))}
      <div className="ml-auto flex h-10 items-center text-white">
        <svg width="150" height="16" fill="none" stroke="#fff" className="mr-1">
          <circle cx="10" cy="3" r="3" />
          <path d="M54 4l12-2v3zM88 4l10-2M102 1c3 2 3 6 0 8M106 0c4 3 4 7 0 10" fill="#fff" />
          <circle cx="137" cy="6" r="6" fill="#888" stroke="none" />
        </svg>
        <span className="flex h-10 w-[80px] items-start justify-center pt-1 pr-4 text-[11px] leading-[14px]">12:51</span>
        <svg width="14" height="16" fill="none" stroke="#fff" strokeWidth="3" className="mr-5">
          <path d="M1.500 16V1.500h11V16" />
        </svg>
        <span className="mr-1 h-full w-px bg-[#6a7278]" />
      </div>
    </div>
  </div>
);

export default function App() {
  return (
    <div className="h-screen overflow-hidden bg-white pr-4 font-['Noto_Sans','Noto_Sans_CJK_JP',sans-serif] text-[12px]">
      <div className="flex h-full flex-col">
        <div className="flex min-h-0 flex-1 overflow-hidden">
          <div className="w-[7px] shrink-0 bg-[linear-gradient(#3f86d0_0%,#5b93d3_10%,#8fb8d8_36%,#b4d0d2_48%,#cbc8b4_52%,#c9bca6_63%,#3f5566_66%,#7c98a6_70%,#4a5c68_73%,#9fb4b4_76%,#c8c0a8_88%,#78a4b4_93%,#5b8ca0_100%)]" />
          <div className="min-w-0 flex-1 border-t border-l border-[#1f7fd0]">
            <header className="flex h-[30px] items-center bg-white pl-2.5 text-black">
              <svg width="13" height="14" viewBox="0 0 13 14" className="mr-1.5 shrink-0">
                <path d="M5 2L7 2 4 10 1 10zM9 0h3L8 10H5z" fill="#c8102e" />
                <path d="M0 12.500h13" stroke="#555" strokeDasharray="2 1" strokeWidth="1.500" />
              </svg>
              <h1 className="text-[11px]">746432: FXDD-MT4 Live Server - [GBPUSD,M5]</h1>
              <div className="ml-auto flex items-center gap-9 pr-2.5">
                <button aria-label="最小化" className="h-px w-[10px] bg-black" />
                <button aria-label="最大化" className="h-[10px] w-[10px] border border-black" />
                <button aria-label="閉じる">
                  <svg width="10" height="10" stroke="#000" className="block">
                    <path d="M0 0l10 10M10 0L0 10" />
                  </svg>
                </button>
              </div>
            </header>
            <nav className="flex h-[21px] items-center border-b border-[#a0a0a0] bg-[#f0f0f0] pl-[5px] text-black">
              <svg width="14" height="14" fill="#fff" stroke="#3f8bd0" className="mr-2 shrink-0">
                <path d="M.5.5h10v9H.5zM.5 2.500h10" />
                <path d="M3.500 4.500h10v9h-10zM3.500 6.500h10" />
                <path d="M5 9l2 3 1-3 2 3 1-3 2 3" fill="none" />
              </svg>
              <ul className="flex gap-[18px]">
                {menus.map((m) => (
                  <li key={m}>
                    <button className="block text-[11px] whitespace-nowrap [font-feature-settings:'palt']">{m}</button>
                  </li>
                ))}
              </ul>
              <div className="ml-auto flex gap-0.5 overflow-hidden">
                <button aria-label="子ウィンドウを最小化" className="flex h-[18px] w-[17px] items-center justify-center border border-[#e0e0e0] bg-white">
                  <span className="mt-1.5 h-0.5 w-1.5 bg-[#778899]" />
                </button>
                <button aria-label="元に戻す" className="flex h-[18px] w-[17px] items-center justify-center border border-[#e0e0e0] bg-white">
                  <svg width="9" height="9" fill="none" stroke="#778899">
                    <path d="M2.500 3V.5h6v5H6M.5 3.500h5v4h-5zM2 1h7M1 4h5" />
                  </svg>
                </button>
                <button aria-label="子ウィンドウを閉じる" className="flex h-[18px] w-[11px] items-center justify-end border border-r-0 border-[#e0e0e0] bg-white">
                  <svg width="6" height="8" stroke="#778899" strokeWidth="2">
                    <path d="M0 1l6 6M0 7l6-6" />
                  </svg>
                </button>
              </div>
            </nav>
            <Toolbar />
            <Chart />
            <TabBar />
            <StatusBar />
          </div>
        </div>
        <Taskbar />
      </div>
    </div>
  );
}
